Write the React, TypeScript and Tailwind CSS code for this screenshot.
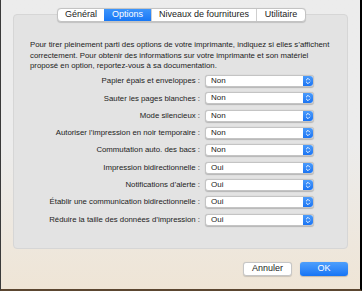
import React from "react";

const tabs = ["Général", "Options", "Niveaux de fournitures", "Utilitaire"];
const tabWidths = ["w-[46px]", "w-[47px]", "w-[105px]", "w-[49px]"];

const options = [
  { label: "Papier épais et enveloppes :", value: "Non" },
  { label: "Sauter les pages blanches :", value: "Non" },
  { label: "Mode silencieux :", value: "Non" },
  { label: "Autoriser l’impression en noir temporaire :", value: "Non" },
  { label: "Commutation auto. des bacs :", value: "Non" },
  { label: "Impression bidirectionnelle :", value: "Oui" },
  { label: "Notifications d’alerte :", value: "Oui" },
  { label: "Établir une communication bidirectionnelle :", value: "Oui" },
  { label: "Réduire la taille des données d’impression :", value: "Oui" },
];

function PopUp({ value }: { value: string }) {
  return (
    <div className="flex h-[12px] w-[109px] items-center rounded-[3px] border-[0.5px] border-[#c4c4c4] bg-white shadow-[0_0.5px_1px_rgba(0,0,0,0.2)]">
      <span className="flex-1 pl-[5px] text-[8px] leading-none text-[#222]">{value}</span>
      <span className="flex h-full w-[10px] items-center justify-center rounded-r-[3px] bg-gradient-to-b from-[#4a9bfb] to-[#1a74f3]">
        <svg width="6" height="8" viewBox="0 0 6 8" fill="none">
          <path d="M1.3 3 L3 1.3 L4.7 3" stroke="white" strokeWidth="0.9" strokeLinecap="round" strokeLinejoin="round" />
          <path d="M1.3 5 L3 6.7 L4.7 5" stroke="white" strokeWidth="0.9" strokeLinecap="round" strokeLinejoin="round" />
        </svg>
      </span>
    </div>
  );
}

export default function App() {
  return (
    <div
      className="flex h-[291px] w-[362px] flex-col border-b-2 border-l border-r-2 border-b-[#5b4630] border-l-[#3a3a3a] border-r-black bg-gradient-to-b from-[#ececec] via-[#ececec] to-[#efe5d6]"
      style={{ fontFamily: '"Liberation Sans", Arial, sans-serif' }}
    >
      {/* tabs */}
      <div className="relative z-10 ml-[56px] mt-[8px] flex h-[13.5px] w-fit overflow-hidden rounded-[4px] border-[0.5px] border-[#c3c3c3] bg-white shadow-[0_0.5px_1px_rgba(0,0,0,0.15)]">
        {tabs.map((tab, i) => (
          <div
            key={tab}
            className={
              "flex h-full items-center justify-center text-[9px] leading-none " +
              tabWidths[i] +
              (i === 1
                ? " bg-gradient-to-b from-[#3d95fb] to-[#1777f5] text-white"
                : " text-[#222]") +
              (i > 1 ? " border-l-[0.5px] border-[#cfcfcf]" : "")
            }
          >
            {tab}
          </div>
        ))}
      </div>

      {/* panel */}
      <div className="ml-[12px] -mt-[7.5px] h-[235px] w-[335px] rounded-[4px] border-[0.5px] border-[#d6d6d6] bg-[#e3e3e3] pt-[25px]">
        <p className="pl-[16px] text-[7.8px] leading-[10.5px] text-[#222]">
          Pour tirer pleinement parti des options de votre imprimante, indiquez si elles s’affichent
          <br />
          correctement. Pour obtenir des informations sur votre imprimante et son matériel
          <br />
          proposé en option, reportez-vous à sa documentation.
        </p>
        <div className="mt-[1px] flex flex-col">
          {options.map((o) => (
            <div key={o.label} className="flex h-[17.3px] items-center">
              <span className="w-[186px] text-right text-[7.8px] leading-none text-[#222]">{o.label}</span>
              <div className="ml-[5px]">
                <PopUp value={o.value} />
              </div>
            </div>
          ))}
        </div>
      </div>

      {/* buttons */}
      <div className="mr-[12px] mt-[13px] flex justify-end gap-[8px]">
        <button className="flex h-[13.5px] w-[49px] items-center justify-center rounded-[3px] border-[0.5px] border-[#c6c6c6] bg-white text-[9px] leading-none text-[#222] shadow-[0_0.5px_1px_rgba(0,0,0,0.15)]">
          Annuler
        </button>
        <button className="flex h-[13.5px] w-[48px] items-center justify-center rounded-[3px] bg-gradient-to-b from-[#4d9ffc] to-[#1574f5] text-[9px] leading-none text-white shadow-[0_0.5px_1px_rgba(0,0,0,0.2)]">
          OK
        </button>
      </div>
    </div>
  );
}
